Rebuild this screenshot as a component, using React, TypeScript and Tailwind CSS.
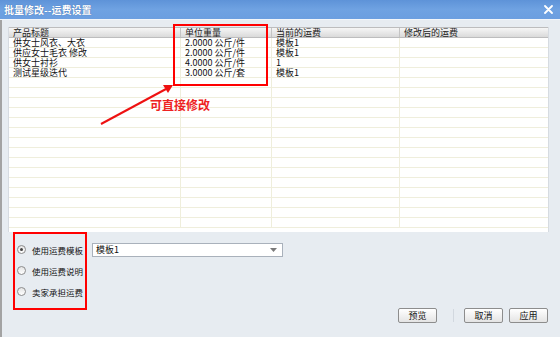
import React from 'react';

const font = { fontFamily: '"Noto Sans CJK SC", "Noto Sans", "Liberation Sans", sans-serif' };

const columns = [
  { title: '产品标题', width: 'w-[172px]' },
  { title: '单位重量', width: 'w-[91px]' },
  { title: '当前的运费', width: 'w-[128px]' },
  { title: '修改后的运费', width: 'flex-1' },
];

const rows = [
  ['供女士风衣、大衣', '2.0000 公斤/件', '模板1', ''],
  ['供应女士毛衣 修改', '2.0000 公斤/件', '模板1', ''],
  ['供女士衬衫', '4.0000 公斤/件', '1', ''],
  ['测试星级迭代', '3.0000 公斤/套', '模板1', ''],
];

const emptyRows = Array.from({ length: 15 }, () => ['', '', '', '']);

const Radio = ({ checked, label }: { checked?: boolean; label: string }) => (
  <div className="flex items-center h-[21px]">
    <span className="w-[9px] h-[9px] rounded-full border border-[#8c8c8c] bg-gradient-to-b from-[#e4e4e4] to-white flex items-center justify-center">
      {checked && <span className="w-[3px] h-[3px] rounded-full bg-[#444]" />}
    </span>
    <span className="ml-[6px] text-[8.5px] leading-[10px] text-[#111]">{label}</span>
  </div>
);

const Button = ({ label, className = '' }: { label: string; className?: string }) => (
  <button className={`w-[39px] h-[15px] border border-[#8d8d8d] rounded-[2px] bg-gradient-to-b from-white to-[#e4e4e4] text-[9px] leading-none text-[#111] flex items-center justify-center ${className}`}>
    {label}
  </button>
);

export default function App() {
  return (
    <div className="relative w-[560px] h-[337px] overflow-hidden bg-[#e7ecf1] flex flex-col" style={font}>
      {/* Title bar */}
      <div className="h-[20px] shrink-0 bg-gradient-to-b from-[#5e93d8] via-[#6fa2e2] to-[#6b9ee0] flex items-center justify-between px-[4px] border-b border-[#f2f5f9]">
        <span className="text-[10px] font-bold text-white leading-none [text-shadow:0_0_1px_#2a5a9a]">批量修改--运费设置</span>
        <svg width="9" height="9" viewBox="0 0 9 9" className="mr-[3px]">
          <path d="M1 1 L8 8 M8 1 L1 8" stroke="white" strokeWidth="1.8" strokeLinecap="round" />
        </svg>
      </div>

      {/* Body */}
      <div className="flex-1 flex flex-col border-l-2 border-[#a3a3a3]">
        {/* Grid */}
        <div className="ml-[6px] mt-[7px] w-[541px] h-[205px] bg-white border-x border-[#d6dbe1] flex flex-col">
          <div className="h-[11px] flex bg-gradient-to-b from-[#f6f6f6] to-[#dadada] border-t border-b border-[#bdbdbd]">
            {columns.map((c, i) => (
              <div
                key={i}
                className={`${c.width} pl-[4px] text-[9px] leading-[9px] text-[#222] ${i < 3 ? 'border-r border-[#c4c4c4]' : ''}`}
              >
                {c.title}
              </div>
            ))}
          </div>
          {[...rows, ...emptyRows].map((r, ri) => (
            <div key={ri} className="h-[10px] flex border-b border-[#efeedc]">
              {r.map((cell, ci) => (
                <div
                  key={ci}
                  className={`${columns[ci].width} pl-[4px] text-[9px] leading-[9px] text-[#111] whitespace-nowrap ${ci < 3 ? 'border-r border-[#efeedc]' : ''}`}
                >
                  {cell}
                </div>
              ))}
            </div>
          ))}
        </div>

        {/* Options */}
        <div className="pl-[15px] pt-[7px] flex flex-col">
          <div className="flex items-center">
            <Radio checked label="使用运费模板" />
            <div className="ml-[9px] w-[191px] h-[14px] bg-white border border-[#a9b1bb] flex items-center justify-between pl-[3px] pr-[5px]">
              <span className="text-[9px] leading-none text-[#111]">模板1</span>
              <svg width="7" height="4" viewBox="0 0 7 4">
                <path d="M0 0 L7 0 L3.5 4 Z" fill="#7a7a7a" />
              </svg>
            </div>
          </div>
          <Radio label="使用运费说明" />
          <Radio label="卖家承担运费" />
        </div>

        {/* Buttons */}
        <div className="mt-[6px] flex items-center justify-end pr-[12px]">
          <Button label="预览" />
          <span className="ml-[16px] w-px h-[13px] bg-[#d2d8df]" />
          <Button label="取消" className="ml-[10px]" />
          <Button label="应用" className="ml-[6px]" />
        </div>
      </div>

      {/* Annotations */}
      <div className="absolute left-[173px] top-[24px] w-[95px] h-[62px] border-2 border-[#f00]" />
      <div className="absolute left-[13px] top-[232px] w-[74px] h-[78px] border-2 border-[#f00]" />
      <svg className="absolute left-0 top-0" width="560" height="337" viewBox="0 0 560 337">
        <line x1="101" y1="124" x2="166" y2="89" stroke="#ee1111" strokeWidth="2" />
        <path d="M173 85 L163 85 L168 93 Z" fill="#ee1111" />
      </svg>
      <span className="absolute left-[150px] top-[99px] text-[12px] font-bold leading-none text-[#ee2222]">可直接修改</span>
    </div>
  );
}
